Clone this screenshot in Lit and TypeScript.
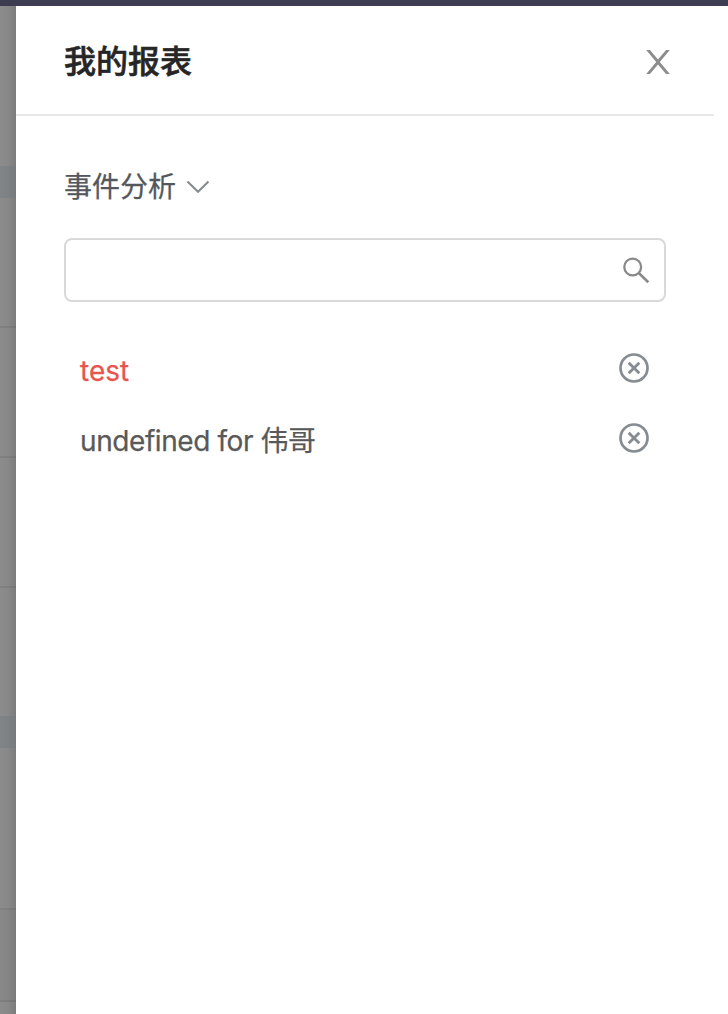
import { LitElement, html, css } from "lit";
import { customElement, property, state } from "lit/decorators.js";
import { classMap } from "lit/directives/class-map.js";

interface Report {
  name: string;
  active: boolean;
}

@customElement("report-row")
class ReportRow extends LitElement {
  @property() name = "";
  @property({ type: Boolean }) active = false;

  static styles = css`
    :host {
      display: block;
    }
    .row {
      display: flex;
      align-items: center;
      justify-content: space-between;
      box-sizing: border-box;
      height: 70px;
      padding: 0 16px;
      color: #595959;
      font-size: 28px;
      line-height: 40px;
      letter-spacing: -0.42px;
      white-space: pre;
    }
    .active {
      color: #e8544e;
      letter-spacing: 0;
    }
    .name {
      padding-top: 1px;
      -webkit-text-stroke: 0.25px currentColor;
    }
    .remove {
      display: block;
      margin-bottom: 4px;
      color: #868c91;
    }
  `;

  render() {
    return html`<div class=${classMap({ row: true, active: this.active })}>
      <span class="name">${this.name}</span>
      <svg class="remove" width="32" height="32" viewBox="0 0 32 32" fill="none" stroke="currentColor">
        <circle cx="16" cy="16" r="13.5" stroke-width="2.7" />
        <path d="M10.7 10.7L21.3 21.3M21.3 10.7L10.7 21.3" stroke-width="2.8" />
      </svg>
    </div>`;
  }
}

@customElement("app-root")
class AppRoot extends LitElement {
  @state() reports: Report[] = [
    { name: "test", active: true },
    { name: "undefined for 伟哥", active: false },
  ];

  static styles = css`
    :host {
      display: flex;
      flex-direction: column;
      height: 1014px;
      overflow: hidden;
      background: #fff;
      font-family: Inter, "Noto Sans CJK SC", sans-serif;
    }
    .topbar {
      flex: none;
      height: 6px;
      background: #3d3c50;
    }
    .main {
      flex: 1;
      display: flex;
      min-height: 0;
    }
    .page {
      flex: none;
      display: flex;
      flex-direction: column;
      width: 16px;
      background: linear-gradient(to right, #8c8c8c, #888 50%, #7c7c7c);
    }
    .cell {
      flex: none;
      box-sizing: border-box;
    }
    .first {
      height: 160px;
    }
    .band {
      height: 32px;
      background: rgba(112, 120, 128, 0.36);
    }
    .line {
      height: 130px;
      border-bottom: 2px solid rgba(0, 0, 0, 0.07);
    }
    .open {
      height: 128px;
    }
    .tall {
      height: 162px;
      border-bottom: 2px solid rgba(0, 0, 0, 0.07);
    }
    .short {
      height: 92px;
      border-bottom: 2px solid rgba(0, 0, 0, 0.07);
      background: rgba(0, 0, 0, 0.015);
    }
    .drawer {
      flex: 1;
      background: #fff;
    }
    .head {
      display: flex;
      align-items: center;
      justify-content: space-between;
      box-sizing: border-box;
      width: 698px;
      height: 110px;
      padding: 4px 43px 0 48px;
      border-bottom: 2px solid #e8e8e8;
    }
    .title {
      margin: 0;
      color: #262626;
      font-size: 32px;
      font-weight: 500;
      line-height: 44px;
      -webkit-text-stroke: 0.6px currentColor;
    }
    .icon {
      display: block;
    }
    .body {
      width: 602px;
      padding: 49px 0 0 48px;
    }
    .select {
      display: flex;
      align-items: center;
      gap: 10px;
      height: 44px;
      color: #54585d;
      font-size: 28px;
      line-height: 44px;
      -webkit-text-stroke: 0.25px currentColor;
    }
    .search {
      display: flex;
      align-items: center;
      justify-content: flex-end;
      box-sizing: border-box;
      height: 64px;
      margin-top: 29px;
      padding-right: 13px;
      border: 2px solid #d9d9d9;
      border-radius: 8px;
    }
    .list {
      padding-top: 33px;
    }
  `;

  render() {
    const cells = ["first", "band", "line", "line", "line", "open", "band", "tall", "short"];
    return html`
      <div class="topbar"></div>
      <div class="main">
        <div class="page">${cells.map((c) => html`<div class="cell ${c}"></div>`)}</div>
        <section class="drawer">
          <header class="head">
            <h1 class="title">我的报表</h1>
            <svg class="icon" width="26" height="26" viewBox="0 0 26 26" fill="#8c8c8c">
              <path d="M1.2 1H4.9L13 10.6L21.1 1H24.8L14.8 13L24.8 25H21.1L13 15.4L4.9 25H1.2L11.2 13Z" />
            </svg>
          </header>
          <div class="body">
            <div class="select">
              <span>事件分析</span>
              <svg class="icon" width="24" height="16" viewBox="0 0 24 16" fill="none" stroke="#858a8f" stroke-width="2">
                <path d="M1.5 2.5L12 12.8L22.5 2.5" />
              </svg>
            </div>
            <div class="search">
              <svg class="icon" width="30" height="30" viewBox="0 0 30 30" fill="none" stroke="#8a8a8a">
                <circle cx="11.7" cy="12" r="8.4" stroke-width="2.3" />
                <path d="M17.5 17.8L27.3 27.2" stroke-width="2.6" />
              </svg>
            </div>
            <div class="list">
              ${this.reports.map((r) => html`<report-row .name=${r.name} .active=${r.active}></report-row>`)}
            </div>
          </div>
        </section>
      </div>
    `;
  }
}
